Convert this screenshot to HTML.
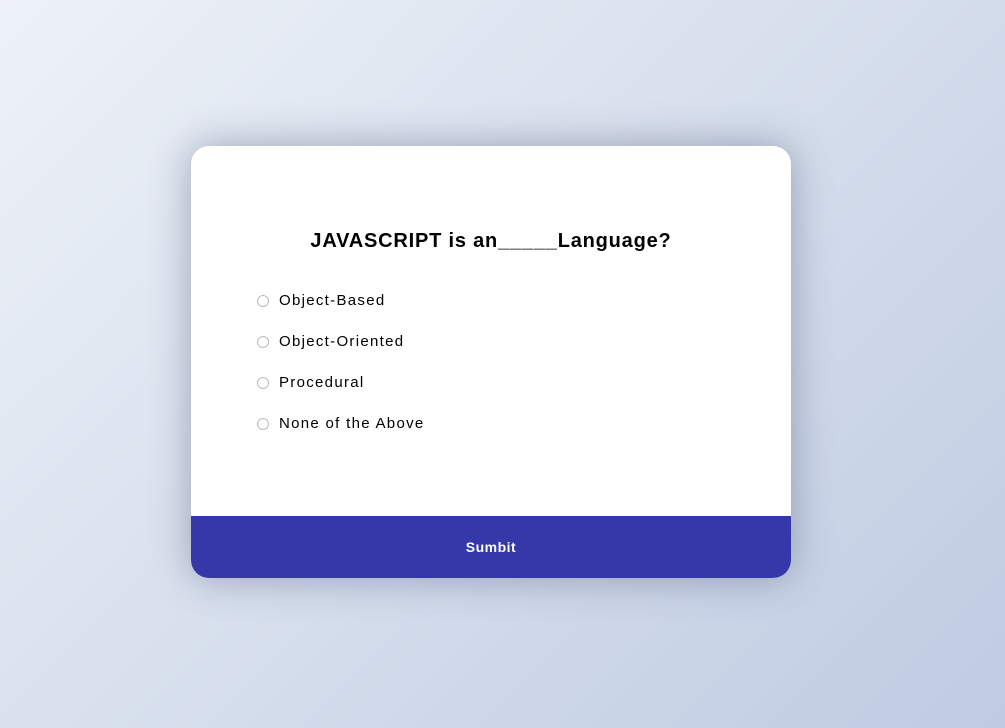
<!DOCTYPE html>
<html><head><style>
html,body{margin:0;padding:0;width:1005px;height:728px;overflow:hidden}
body{background:linear-gradient(135deg,#eef2f8 0%,#d9e1ee 45%,#bfcbe2 100%);font-family:"Liberation Sans",sans-serif;position:relative}
.card{position:absolute;left:191px;top:146px;width:600px;height:432px;background:#fff;border-radius:18px;overflow:hidden;box-shadow:0 0 40px rgba(70,80,110,.45)}
h2{position:absolute;left:0;width:600px;top:84px;margin:0;text-align:center;font-size:20px;font-weight:bold;letter-spacing:.8px;color:#000}
.opt{position:absolute;left:66px;font-size:15px;color:#000;letter-spacing:1.3px;line-height:18px}
.opt i{position:absolute;left:0;top:3px;width:10px;height:10px;border:1px solid #bbb;border-radius:50%}
.opt span{margin-left:22px}
.foot{position:absolute;left:0;top:370px;width:600px;height:62px;background:#3538a8;color:#fff;text-align:center;line-height:62px;font-size:14px;font-weight:bold;letter-spacing:.5px}
</style></head><body>
<div class="card">
<h2>JAVASCRIPT is an_____Language?</h2>
<div class="opt" style="top:146px"><i></i><span>Object-Based</span></div>
<div class="opt" style="top:187px"><i></i><span>Object-Oriented</span></div>
<div class="opt" style="top:228px"><i></i><span>Procedural</span></div>
<div class="opt" style="top:269px"><i></i><span>None of the Above</span></div>
<div class="foot">Sumbit</div>
</div>
</body></html>
